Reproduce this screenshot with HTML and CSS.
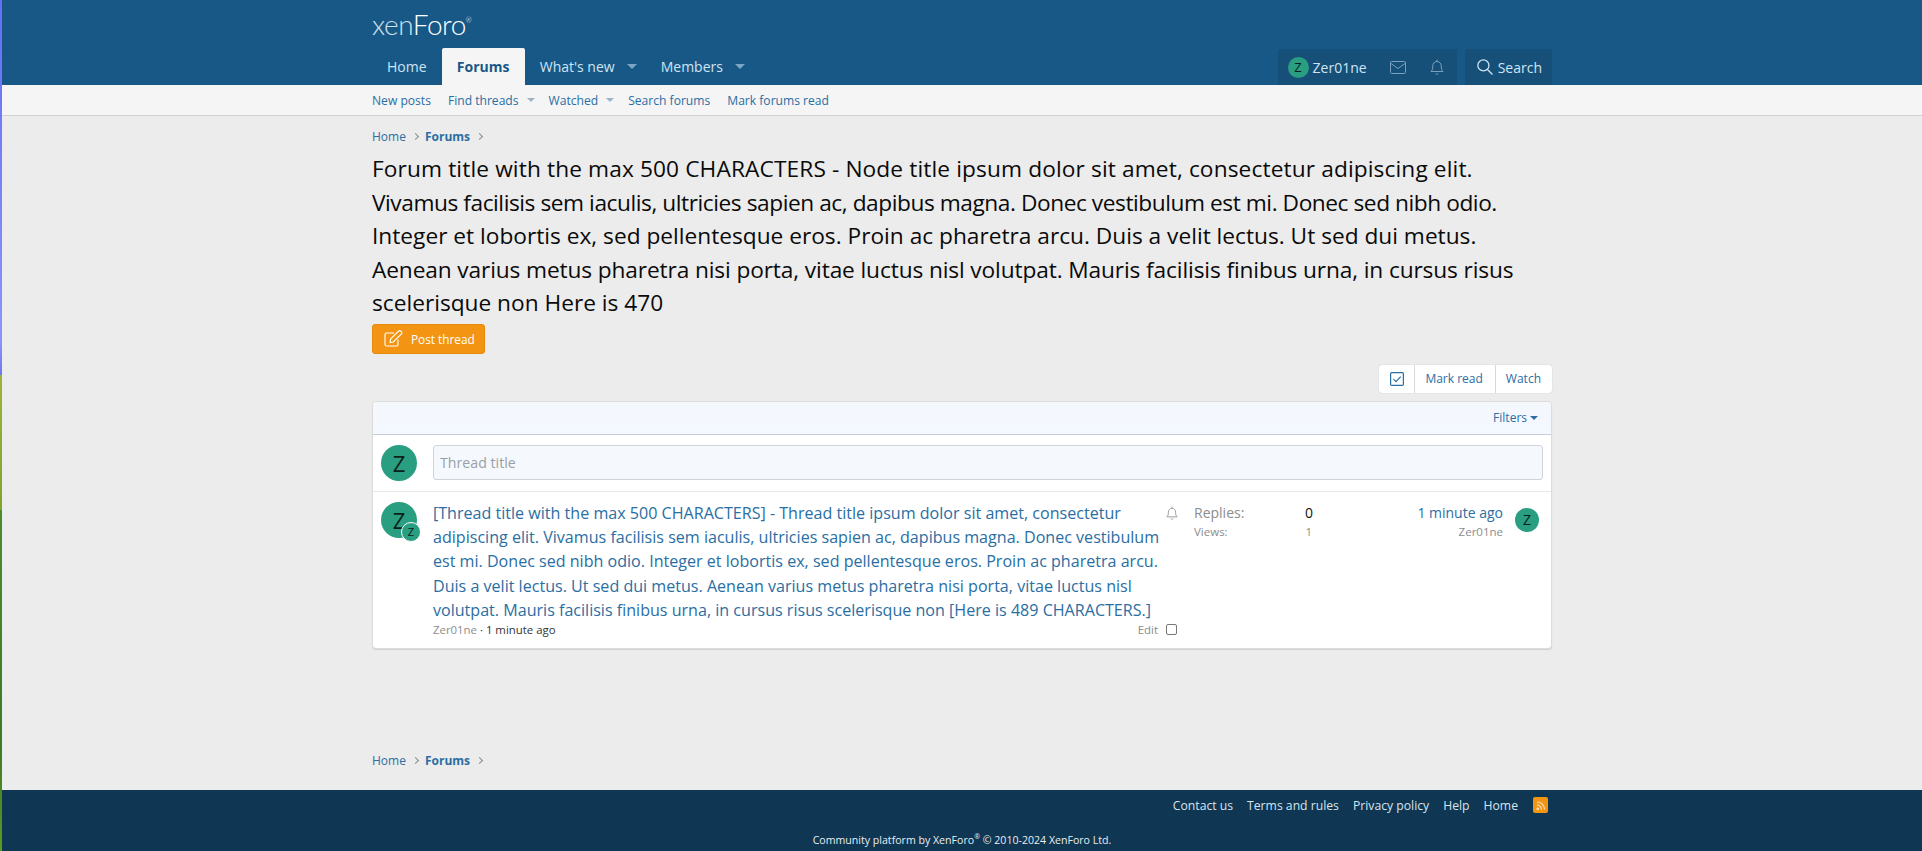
FILE: index.html
```html
<!DOCTYPE html>
<html lang="en">
<head>
    <meta charset="UTF-8">
    <meta name="viewport" content="width=device-width, initial-scale=1.0">
    <title>Forums | XenForo</title>
    <link rel="stylesheet" href="styles.css">
</head>
<body>
    <div class="edge-strip"></div>
    <div class="page">
        <header class="top-header">
            <div class="inner">
                <div class="logo-row"><span class="logo"><span class="logo-xen">xen</span>Foro<sup class="logo-reg">®</sup></span></div>
                <div class="nav-row">
                    <nav class="main-nav">
                        <a class="nav-tab">Home</a>
                        <a class="nav-tab active">Forums</a>
                        <a class="nav-tab">What's new<span class="caret"></span></a>
                        <a class="nav-tab">Members<span class="caret"></span></a>
                    </nav>
                    <div class="user-nav">
                        <div class="user-group">
                            <a class="user-link"><span class="avatar avatar-xs">Z</span>Zer01ne</a>
                            <a class="user-icon">
                                <svg width="16" height="13" viewBox="0 0 16 13" fill="none" stroke="currentColor" stroke-width="1"><rect x="0.5" y="0.5" width="15" height="12" rx="1"/><path d="M1 2.5l7 5 7-5"/></svg>
                            </a>
                            <a class="user-icon">
                                <svg width="14" height="16" viewBox="0 0 14 16" fill="none" stroke="currentColor" stroke-width="1"><path d="M1 12.5c1.2-1.2 1.8-2.4 1.8-5.5C2.8 4.4 4.6 2.5 7 2.5s4.2 1.900 4.200 4.500c0 3.100.6 4.300 1.800 5.500z"/><path d="M7 .5v2M5.700 14.500c.3.600.8.900 1.300.900s1-.3 1.300-.9"/></svg>
                            </a>
                        </div>
                        <a class="search-link">
                            <svg width="16" height="16" viewBox="0 0 15 15" fill="none" stroke="currentColor" stroke-width="1.200"><circle cx="6" cy="6" r="5.200"/><path d="M9.800 9.800l4.700 4.700"/></svg>
                            Search
                        </a>
                    </div>
                </div>
            </div>
        </header>

        <div class="sub-nav">
            <div class="inner sub-nav-links">
                <a>New posts</a>
                <a>Find threads<span class="caret caret-sub"></span></a>
                <a>Watched<span class="caret caret-sub"></span></a>
                <a>Search forums</a>
                <a>Mark forums read</a>
            </div>
        </div>

        <main class="inner content">
            <div class="breadcrumb">
                <a>Home</a><span class="crumb-sep"></span><a class="crumb-bold">Forums</a><span class="crumb-sep"></span>
            </div>
            <h1 class="page-title">
                <span class="title-line loose">Forum title with the max 500 CHARACTERS - Node title ipsum dolor sit amet, consectetur adipiscing elit.</span>
                <span class="title-line tight">Vivamus facilisis sem iaculis, ultricies sapien ac, dapibus magna. Donec vestibulum est mi. Donec sed nibh odio.</span>
                <span class="title-line">Integer et lobortis ex, sed pellentesque eros. Proin ac pharetra arcu. Duis a velit lectus. Ut sed dui metus.</span>
                <span class="title-line snug">Aenean varius metus pharetra nisi porta, vitae luctus nisl volutpat. Mauris facilisis finibus urna, in cursus risus</span>
                <span class="title-line">scelerisque non Here is 470</span>
            </h1>
            <a class="post-btn">
                <svg width="19" height="17" viewBox="0 0 19 17" fill="none" stroke="currentColor" stroke-width="1.100"><path d="M14 9.500v5a1.500 1.500 0 0 1-1.500 1.500h-10A1.500 1.500 0 0 1 1 14.500v-10A1.500 1.500 0 0 1 2.500 3H10"/><path d="M6.500 9.200L14.700 1a1.300 1.300 0 0 1 1.900 0l.9.900a1.300 1.300 0 0 1 0 1.900L9.300 12l-3.300.5z"/></svg>
                Post thread
            </a>

            <div class="action-row">
                <div class="btn-group">
                    <a class="group-btn">
                        <svg width="14" height="14" viewBox="0 0 14 14" fill="none" stroke="currentColor" stroke-width="1.200"><rect x="0.600" y="0.600" width="12.800" height="12.800" rx="1.200"/><path d="M3.500 7.200l2.500 2.500 4.700-5"/></svg>
                    </a>
                    <a class="group-btn">Mark read</a>
                    <a class="group-btn">Watch</a>
                </div>
            </div>

            <section class="thread-block">
                <div class="filter-bar"><a class="filter-link">Filters<span class="filter-caret"></span></a></div>

                <div class="quick-row">
                    <span class="avatar avatar-m">Z</span>
                    <div class="fake-input">Thread title</div>
                </div>

                <div class="thread-row">
                    <div class="thread-avatar">
                        <span class="avatar avatar-m">Z</span>
                        <span class="avatar avatar-badge">Z</span>
                    </div>
                    <div class="thread-main">
                        <div class="thread-title-row">
                            <a class="thread-title">[Thread title with the max 500 CHARACTERS] - Thread title ipsum dolor sit amet, consectetur adipiscing elit. Vivamus facilisis sem iaculis, ultricies sapien ac, dapibus magna. Donec vestibulum est mi. Donec sed nibh odio. Integer et lobortis ex, sed pellentesque eros. Proin ac pharetra arcu. Duis a velit lectus. Ut sed dui metus. Aenean varius metus pharetra nisi porta, vitae luctus nisl volutpat. Mauris facilisis finibus urna, in cursus risus scelerisque non [Here is 489 CHARACTERS.]</a>
                            <svg class="thread-bell" width="12" height="14" viewBox="0 0 14 16" fill="none" stroke="currentColor" stroke-width="1.100"><path d="M1 12.500c1.200-1.200 1.800-2.400 1.800-5.500C2.800 4.400 4.600 2.500 7 2.500s4.200 1.900 4.200 4.500c0 3.100.6 4.300 1.800 5.500z"/><path d="M7 .5v2M5.700 14.500c.3.6.8.9 1.300.9s1-.3 1.300-.9"/></svg>
                        </div>
                        <div class="thread-meta">
                            <span class="meta-text"><span class="muted">Zer01ne</span> · 1 minute ago</span>
                            <span class="meta-edit">Edit<span class="checkbox"></span></span>
                        </div>
                    </div>
                    <div class="thread-stats">
                        <div class="stat-line stat-big"><span>Replies:</span><span class="stat-num">0</span></div>
                        <div class="stat-line stat-small"><span>Views:</span><span class="stat-num">1</span></div>
                    </div>
                    <div class="thread-last">
                        <div class="last-text">
                            <a class="last-time">1 minute ago</a>
                            <span class="last-user">Zer01ne</span>
                        </div>
                        <span class="avatar avatar-s">Z</span>
                    </div>
                </div>
            </section>

            <div class="breadcrumb breadcrumb-bottom">
                <a>Home</a><span class="crumb-sep"></span><a class="crumb-bold">Forums</a><span class="crumb-sep"></span>
            </div>
        </main>

        <footer class="site-footer">
            <div class="inner">
                <div class="footer-links">
                    <a>Contact us</a>
                    <a>Terms and rules</a>
                    <a>Privacy policy</a>
                    <a>Help</a>
                    <a>Home</a>
                    <span class="rss">
                        <svg width="10" height="12" viewBox="0 0 10 12" fill="none" stroke="#fff" stroke-opacity=".75" stroke-width="1.200"><circle cx="1.800" cy="9.800" r=".8"/><path d="M1 6a4.500 4.500 0 0 1 4.500 4.500M1 3a7.500 7.500 0 0 1 7.500 7.500"/></svg>
                    </span>
                </div>
                <div class="copyright">Community platform by XenForo<sup>®</sup> © 2010-2024 XenForo Ltd.</div>
            </div>
        </footer>
    </div>
</body>
</html>
```

FILE: styles.css
```css
* {
    margin: 0;
    padding: 0;
    box-sizing: border-box;
    font-family: 'Open Sans', 'Noto Sans', sans-serif;
}

html, body {
    height: 851px;
    overflow: hidden;
}

body {
    display: flex;
    background-color: #ececec;
    color: #141414;
}

/* strip down the left side of the window */
.edge-strip {
    flex: 0 0 2px;
    background: linear-gradient(180deg, #666ef2 0%, #8a94fb 40%, #7078f0 44%, #9cb33a 44.1%, #7fa52e 59.9%, #4c8a2e 60%, #3f7a28 88%, #5f9a20 100%);
}

.page {
    flex: 1;
    min-width: 0;
    display: flex;
    flex-direction: column;
}

.inner {
    width: 1200px;
    margin: 0 auto;
    padding: 0 10px;
}

a {
    color: #2a6ea3;
    text-decoration: none;
}

/* header */
.top-header {
    background-color: #185886;
    height: 85px;
}

.logo-row {
    height: 48px;
    padding-top: 9px;
}

.logo {
    font-family: 'Lato', sans-serif;
    font-weight: 300;
    font-size: 28px;
    line-height: 30px;
    color: #fff;
    letter-spacing: -0.5px;
}

.logo-xen {
    font-family: 'Lato', sans-serif;
    color: #cfe1ee;
}

.logo-reg {
    font-family: 'Lato', sans-serif;
    font-size: 7px;
    vertical-align: 12px;
    line-height: 0;
}

.nav-row {
    display: flex;
    justify-content: space-between;
    height: 37px;
}

.main-nav {
    display: flex;
}

.nav-tab {
    display: flex;
    align-items: center;
    padding: 0 15px;
    font-size: 14px;
    color: #cfe4f4;
    border-radius: 2px 2px 0 0;
}

.nav-tab.active {
    padding: 0 15.250px;
    background-color: #f5f5f5;
    color: #185886;
    font-weight: 700;
}

.caret {
    width: 0;
    height: 0;
    margin-left: 12px;
    margin-right: -6px;
    border-left: 5px solid transparent;
    border-right: 5px solid transparent;
    border-top: 5px solid #7da6c4;
}

.user-nav {
    display: flex;
    gap: 8px;
    height: 36px;
    margin-top: 1px;
}

.user-group {
    display: flex;
    background-color: #164f78;
    border-radius: 3px 3px 0 0;
}

.user-link, .user-icon, .search-link {
    display: flex;
    align-items: center;
    color: #cfe4f4;
    font-size: 14px;
}

.user-link {
    gap: 4px;
    padding: 0 11px 0 10px;
}

.user-icon {
    width: 39.500px;
    justify-content: center;
    color: #7ba0bd;
    border-left: 1px solid #155078;
}

.search-link {
    gap: 5px;
    padding: 0 10px 0 12px;
    background-color: #164f78;
    border-radius: 3px 3px 0 0;
}

/* avatars */
.avatar {
    display: inline-flex;
    align-items: center;
    justify-content: center;
    border-radius: 50%;
    background-color: #299e80;
    color: #0c1f1a;
    flex: none;
}

.avatar-xs { width: 21px; height: 21px; font-size: 13px; }
.avatar-s { width: 24px; height: 24px; font-size: 14px; }
.avatar-m { width: 36px; height: 36px; font-size: 22px; }

/* sub nav */
.sub-nav {
    background-color: #f5f5f5;
    height: 31px;
    border-bottom: 1px solid #d2d2d2;
}

.sub-nav-links {
    display: flex;
    gap: 17px;
    align-items: center;
    height: 30px;
    font-size: 12.100px;
}

.sub-nav-links a {
    display: flex;
    align-items: center;
}

.caret-sub {
    margin-left: 8px;
    margin-right: -3px;
    border-left-width: 4px;
    border-right-width: 4px;
    border-top-width: 4px;
    border-top-color: #9db4c6;
}

/* content */
.content {
    flex: 1;
    width: 1200px;
}

.breadcrumb {
    display: flex;
    align-items: center;
    gap: 7px;
    height: 18px;
    margin-top: 11px;
    font-size: 12px;
}

.crumb-bold {
    font-weight: 700;
}

.crumb-sep {
    width: 5px;
    height: 5px;
    border-top: 1px solid #8c8c8c;
    border-right: 1px solid #8c8c8c;
    transform: rotate(45deg);
}

.page-title {
    margin-top: 7px;
    font-size: 22.700px;
    font-weight: 400;
    line-height: 33.600px;
    color: #0a0a0a;
}

/* lines kept as in the node title, tracking evens out their lengths */
.title-line {
    display: block;
    white-space: nowrap;
}

.loose { letter-spacing: 0.120px; }
.tight { letter-spacing: -0.440px; }
.snug { letter-spacing: -0.120px; }

.post-btn {
    display: inline-flex;
    align-items: center;
    gap: 8px;
    height: 30px;
    margin-top: 4px;
    padding: 0 9px 0 11px;
    background-color: #f39512;
    border: 1px solid #e58a0c;
    border-radius: 3px;
    color: #fff;
    font-size: 11.800px;
    font-weight: 500;
}

.action-row {
    display: flex;
    justify-content: flex-end;
    margin-top: 11px;
}

.btn-group {
    display: flex;
    height: 28px;
    background-color: #fff;
    border-radius: 3px;
    box-shadow: 0 0 1px rgba(0, 0, 0, 0.25);
}

.group-btn {
    display: flex;
    align-items: center;
    padding: 0 12px 0 10px;
    font-size: 12px;
    border-left: 1px solid #d8d8d8;
}

.group-btn:last-child {
    padding: 0 11px 0 10px;
}

.group-btn:first-child {
    width: 35px;
    padding: 0;
    justify-content: center;
    border-left: none;
}

/* thread list */
.thread-block {
    margin-top: 8px;
    background-color: #fff;
    border: 1px solid #dcdcdc;
    border-radius: 4px;
    box-shadow: 0 1px 1px rgba(0, 0, 0, 0.12);
}

.filter-bar {
    display: flex;
    justify-content: flex-end;
    align-items: center;
    height: 33px;
    padding: 0 13px;
    background: linear-gradient(180deg, #f4f8fd, #f4f8ff);
    border-bottom: 1px solid #c9ced6;
    border-radius: 4px 4px 0 0;
    font-size: 12px;
}

.filter-link {
    display: flex;
    align-items: center;
    gap: 3px;
}

.filter-caret {
    width: 0;
    height: 0;
    border-left: 4px solid transparent;
    border-right: 4px solid transparent;
    border-top: 4px solid #2a6ea3;
}

.quick-row {
    display: flex;
    align-items: center;
    gap: 16px;
    height: 57px;
    padding: 0 8px;
    border-bottom: 1px solid #e7e7e7;
}

.fake-input {
    flex: 1;
    height: 35px;
    line-height: 33px;
    padding-left: 6px;
    background-color: #f5f9fe;
    border: 1px solid #d0d4da;
    border-radius: 3px;
    color: #9a9fa6;
    font-size: 14.200px;
}

.thread-row {
    display: flex;
    height: 156px;
    padding: 10px 12px 0 8px;
}

.thread-avatar {
    position: relative;
    width: 36px;
    height: 36px;
    flex: none;
    margin-right: 16px;
}

.avatar-badge {
    position: absolute;
    right: -4px;
    bottom: -4px;
    width: 18px;
    height: 18px;
    font-size: 11px;
    border: 1px solid #fff;
    box-sizing: content-box;
}

.thread-main {
    width: 745px;
    flex: none;
    margin-top: -1px;
}

.thread-title-row {
    display: flex;
    justify-content: space-between;
}

.thread-title {
    width: 730px;
    flex: none;
    font-size: 16.080px;
    line-height: 24.200px;
}

.thread-bell {
    color: #9a9a9a;
    margin-top: 5px;
}

.thread-meta {
    display: flex;
    justify-content: space-between;
    font-size: 11.400px;
    line-height: 16px;
    color: #333;
}

.muted {
    color: #8c8c8c;
}

.meta-edit {
    display: flex;
    align-items: center;
    gap: 8px;
    color: #8c8c8c;
}

.checkbox {
    width: 11px;
    height: 11px;
    margin-right: 1px;
    border: 1px solid #777;
    border-radius: 2px;
}

.thread-stats {
    width: 119px;
    flex: none;
    margin-left: 16px;
    margin-top: 1px;
}

.stat-line {
    display: flex;
    justify-content: space-between;
    color: #8c8c8c;
}

.stat-big {
    font-size: 14px;
    line-height: 20px;
}

.stat-big .stat-num {
    color: #141414;
}

.stat-small {
    font-size: 11.500px;
    line-height: 17px;
}

.stat-small .stat-num {
    padding-right: 1px;
}

.thread-last {
    flex: 1;
    display: flex;
    justify-content: flex-end;
    gap: 12px;
}

.last-text {
    display: flex;
    flex-direction: column;
    align-items: flex-end;
    margin-top: 1px;
}

.last-time {
    font-size: 14px;
    line-height: 20px;
}

.last-user {
    font-size: 11.500px;
    line-height: 17px;
    color: #8c8c8c;
}

.thread-last .avatar-s {
    margin-top: 6px;
}

.breadcrumb-bottom {
    margin-top: 103px;
}

/* footer */
.site-footer {
    height: 61px;
    overflow: hidden;
    background-color: #0f3652;
}

.footer-links {
    display: flex;
    justify-content: flex-end;
    align-items: center;
    gap: 14px;
    height: 30px;
    font-size: 12.200px;
}

.footer-links a {
    color: #d8e4ee;
}

.rss {
    display: inline-flex;
    align-items: center;
    justify-content: center;
    width: 15px;
    height: 16px;
    margin-left: 1px;
    margin-right: 4px;
    background-color: #f39512;
    border-radius: 2px;
}

.copyright {
    margin-top: 13px;
    text-align: center;
    font-size: 10.600px;
    line-height: 14px;
    color: #e8eef3;
}

.copyright sup {
    font-size: 7px;
    line-height: 0;
}
```
